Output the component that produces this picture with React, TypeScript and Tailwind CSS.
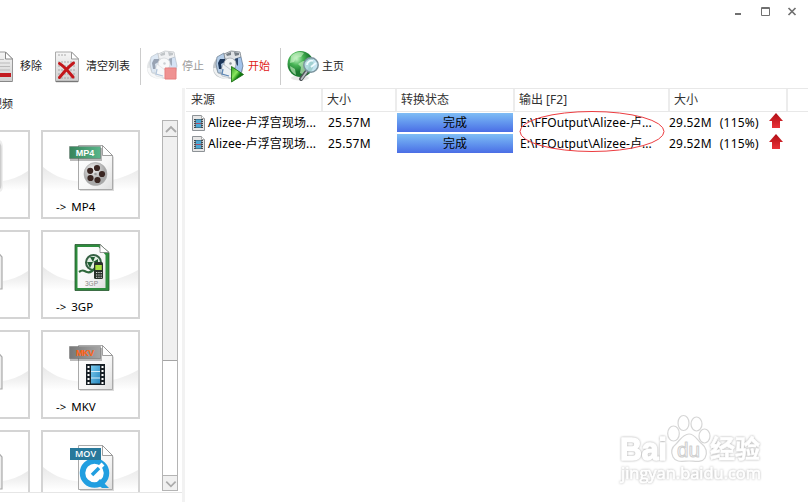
import type { ReactNode } from "react";

const Film = () => (
  <g>
    <rect x="0" y="0" width="19" height="21" fill="#182026" />
    <rect x="5" y="1.5" width="9" height="18" fill="url(#filmBlue)" />
    <path d="M5 7.5h9M5 14h9" stroke="#d5eefa" strokeWidth="1" />
    <path d="M2.5 2v18M16.5 2v18" stroke="#fff" strokeWidth="2" strokeDasharray="2 2" />
  </g>
);

const Reel = () => (
  <g>
    <circle cx="0" cy="0" r="11.5" fill="url(#reelGrey)" stroke="#aaa" strokeWidth="0.6" />
    <circle cx="1.5" cy="-6" r="3.1" fill="#3a2622" />
    <circle cx="6.5" cy="0" r="3.1" fill="#3a2622" />
    <circle cx="2" cy="6" r="3.1" fill="#3a2622" />
    <circle cx="-5" cy="4" r="3.1" fill="#3a2622" />
    <circle cx="-5.3" cy="-3.2" r="3.1" fill="#3a2622" />
    <circle cx="0" cy="0" r="1.3" fill="#999" />
  </g>
);

const Defs = () => (
  <svg className="absolute h-0 w-0">
    <defs>
      <linearGradient id="paper" x1="0" y1="0" x2="1" y2="1">
        <stop offset="0" stopColor="#fff" />
        <stop offset="0.6" stopColor="#f7f7f7" />
        <stop offset="1" stopColor="#dedede" />
      </linearGradient>
      <linearGradient id="paperDark" x1="0" y1="0" x2="0" y2="1">
        <stop offset="0" stopColor="#f6f6f6" />
        <stop offset="1" stopColor="#cfcfcf" />
      </linearGradient>
      <linearGradient id="filmBlue" x1="0" y1="0" x2="1" y2="1">
        <stop offset="0" stopColor="#7ccdf0" />
        <stop offset="1" stopColor="#2585bd" />
      </linearGradient>
      <radialGradient id="reelGrey" cx="0.4" cy="0.3">
        <stop offset="0" stopColor="#f4f4f4" />
        <stop offset="1" stopColor="#a9a9a9" />
      </radialGradient>
      <linearGradient id="tagGreen" x1="0" y1="0" x2="1" y2="0">
        <stop offset="0" stopColor="#37845b" />
        <stop offset="1" stopColor="#59b58a" />
      </linearGradient>
      <linearGradient id="tagGrey" x1="0" y1="0" x2="1" y2="0">
        <stop offset="0" stopColor="#777" />
        <stop offset="1" stopColor="#a5a5a5" />
      </linearGradient>
      <radialGradient id="globe" cx="0.35" cy="0.3">
        <stop offset="0" stopColor="#c5f5c6" />
        <stop offset="0.5" stopColor="#48b556" />
        <stop offset="1" stopColor="#1c7a30" />
      </radialGradient>
      <linearGradient id="play" x1="0" y1="0" x2="1" y2="1">
        <stop offset="0" stopColor="#2f9a20" />
        <stop offset="0.4" stopColor="#8be860" />
        <stop offset="0.6" stopColor="#128010" />
        <stop offset="1" stopColor="#0a4c08" />
      </linearGradient>
      <linearGradient id="arrowRed" x1="0" y1="0" x2="0" y2="1">
        <stop offset="0" stopColor="#b00d14" />
        <stop offset="1" stopColor="#e93238" />
      </linearGradient>
      <linearGradient id="swoosh" x1="0" y1="0" x2="0" y2="1">
        <stop offset="0" stopColor="#e9e9e9" />
        <stop offset="0.5" stopColor="#f2f2f2" />
        <stop offset="1" stopColor="#fff" />
      </linearGradient>
    </defs>
  </svg>
);

const ClearIcon = () => (
  <svg width="24" height="32" viewBox="0 0 24 32" className="block shrink-0">
    <path d="M.5 1h16l7 7v22.500H.5z" fill="url(#paperDark)" stroke="#aaa" />
    <path d="M1 30.500h22" stroke="#777" strokeWidth="1.4" />
    <path d="M16.5 1v7h7z" fill="#fff" stroke="#999" />
    <path d="M3 4h9M3 11h17M3 15h17M3 19h17M3 23h17M3 27h17" stroke="#999" strokeWidth="0.8" strokeDasharray="2 1" />
    <path d="M4.500 12.500c5 3 9 8 13.500 13.500M18.500 12C13 16 9 21 4.500 26.500" fill="none" stroke="#c4171b" strokeWidth="3" strokeLinecap="round" />
  </svg>
);

// left part is cut off by the window edge
const RemoveIcon = () => (
  <svg width="14" height="32" viewBox="0 0 14 32" className="block shrink-0">
    <path d="M-9 1H5.500l7 7v22.500H-9z" fill="url(#paperDark)" stroke="#999" />
    <path d="M5.500 1v7h7z" fill="#fff" stroke="#888" />
    <path d="M0 8.500h4M0 12h10M0 15.500h10M0 19h10" stroke="#bbb" />
    <path d="M0 22h11v4H0z" fill="#c31a20" />
    <path d="M0 30.500h12" stroke="#888" />
  </svg>
);

const Machine = ({ children, faded }: { children: ReactNode; faded?: boolean }) => (
  <svg width="32" height="33" viewBox="0 0 32 33" className="block shrink-0">
    <g opacity={faded ? 0.45 : 1}>
      <path d="M0 18c0-6 3-10 7-11h17c4 2 6 6 6 11 0 7-5 11-15 11S0 25 0 18z" fill="#c3c8cc" />
      <path d="M1.500 18c1 6 6 9.500 14 10" fill="none" stroke="#eff1f2" strokeWidth="2.500" />
      <path d="M4 7l7-4 1 6-2 14H5L3 14z" fill="#b4cde8" stroke="#7a8a9a" strokeWidth="0.8" />
      <path d="M11 4l7-3 9 1 1 5-5 3-11-1z" fill="#dfe2e5" stroke="#7c848b" strokeWidth="0.8" />
      <path d="M13 4l5-2v3l-4 1zM21 2l5 1v2l-4 1z" fill="#777f86" />
      <path d="M7 9h5v3l-4 2 1 5H6l-1-6z" fill="#1d3658" />
      <path d="M22 9l6-2 2 9-2 7-6-3z" fill="#a3c3ea" stroke="#6c819b" strokeWidth="0.8" />
      <path d="M22 9l3-1v8l-2-2z" fill="#2a4467" />
      <circle cx="17" cy="14" r="6" fill="#f1f3f4" stroke="#a3aab1" strokeWidth="0.8" />
      <circle cx="17.500" cy="13.500" r="1.200" fill="#8d959c" />
      <path d="M10 14l4 3 4 3 4 4-4 4-9-2-1-5z" fill="#edf1f4" stroke="#a4adb6" strokeWidth="0.6" />
      <path d="M10 19l-1 5 7 2" fill="none" stroke="#5c85b3" strokeWidth="1.300" />
    </g>
    {children}
  </svg>
);

const GlobeIcon = () => (
  <svg width="34" height="33" viewBox="0 0 34 33" className="block shrink-0">
    <ellipse cx="13" cy="28" rx="9" ry="2.500" fill="#e8e8e8" />
    <circle cx="13.500" cy="14" r="13" fill="url(#globe)" />
    <path d="M4 6c4-4 9-5 13-3l-3 4-5 1-2 4-4 1zM16 11l7 1-2 7-4 6-4-2 1-6-3-3zM3 16l5 3 1 6c-4-2-6-5-6-9z" fill="#d4f7cf" opacity="0.6" />
    <path d="M20 21l-6 8" stroke="#505659" strokeWidth="4" strokeLinecap="round" />
    <path d="M19.500 22l-5 7" stroke="#b8bfc2" strokeWidth="1.7" strokeLinecap="round" />
    <circle cx="24" cy="15" r="7.200" fill="#b9dfed" fillOpacity="0.85" stroke="#7b949e" strokeWidth="1.5" />
    <path d="M20 15c0-3 3-5 6-4M24 17l5-4" stroke="#effbff" strokeWidth="1.8" fill="none" />
  </svg>
);

const Swoosh = () => <path d="M0 35c12 10 25 15 47 15s36-5 48-12v20H0z" fill="url(#swoosh)" />;

const Paper = () => (
  <g>
    <path d="M36 14h24l10 10v34H36z" fill="#999" opacity="0.35" transform="translate(1 1)" />
    <path d="M35.500 13.500h24l10 10v34h-34z" fill="url(#paper)" stroke="#aaa" />
    <path d="M59.500 13.500v10h10z" fill="#fff" stroke="#888" strokeWidth="0.8" />
  </g>
);

const Tag = ({ text, fill, color }: { text: string; fill: string; color: string }) => (
  <g>
    <rect x="27" y="16" width="32" height="13" fill="#555" opacity="0.4" />
    <rect x="26.500" y="14.500" width="31" height="12" fill={fill} stroke="#555" strokeOpacity="0.35" />
    <text
      x="42"
      y="24"
      fill={color}
      fontSize="9"
      fontWeight="700"
      textAnchor="middle"
      textLength="18.500"
      fontFamily="Liberation Sans, sans-serif"
    >
      {text}
    </text>
  </g>
);

const art: Record<string, ReactNode> = {
  MP4: (
    <>
      <Paper />
      <g transform="translate(52.500 42)">
        <Reel />
      </g>
      <Tag text="MP4" fill="url(#tagGreen)" color="#fff" />
    </>
  ),
  "3GP": (
    <>
      <path d="M32 12.500h25l9 8v38H32z" fill="#2d8c3d" stroke="#27582e" strokeWidth="0.8" />
      <path d="M34.500 15h21l7 8v33h-28z" fill="url(#paper)" />
      <path d="M57 12.500v8h9z" fill="#fff" stroke="#777" strokeWidth="0.7" />
      <circle cx="50.500" cy="30.500" r="7.500" fill="#e4efe5" stroke="#356043" strokeWidth="2" />
      <path d="M50 30l-3-5h5zM50 30l-6 0 3 6zM50 30l5-3v5z" fill="#205d32" />
      <path d="M36 40c4-3 5-1 8 0s5 0 8-4" fill="none" stroke="#2f683b" strokeWidth="2.200" />
      <rect x="51" y="30" width="9" height="17" rx="1.500" fill="#29312a" />
      <rect x="52.300" y="33" width="6.500" height="5" fill="#a7df42" />
      <path d="M53 40.500h6M53 43h6M53 45.300h6" stroke="#ddd" strokeDasharray="1.300 1" />
      <text x="48.500" y="54" fontSize="6.500" fill="#888" textAnchor="middle" fontFamily="Liberation Sans, sans-serif">
        3GP
      </text>
    </>
  ),
  MKV: (
    <>
      <Paper />
      <g transform="translate(43 32)">
        <Film />
      </g>
      <Tag text="MKV" fill="url(#tagGrey)" color="#ff6417" />
    </>
  ),
  MOV: (
    <>
      <Paper />
      <circle cx="51.500" cy="41" r="12" fill="#fff" stroke="#209ee0" strokeWidth="5.500" />
      <path d="M57 47l9 9h-7l-6-5z" fill="#209ee0" />
      <path d="M49 43l7-7" stroke="#209ee0" strokeWidth="3.500" />
      <path d="M57 35l3-3" stroke="#fff" strokeWidth="4" />
      <rect x="27" y="16" width="31" height="12" fill="#28799b" />
      <text
        x="42.500"
        y="25"
        fontSize="9"
        fontWeight="600"
        fill="#fff"
        textAnchor="middle"
        textLength="21"
        fontFamily="Open Sans, sans-serif"
      >
        MOV
      </text>
    </>
  ),
};

const FormatCard = ({ name }: { name: string }) => (
  <div className="h-[89px] w-[99px] shrink-0 border-2 border-[#d4d4d4] bg-white">
    <svg width="95" height="67" viewBox="0 0 95 67" className="block">
      <Swoosh />
      {art[name]}
    </svg>
    <p className="flex gap-[5px] pl-[13px] font-['Noto_Sans'] text-[11.5px] leading-[16px] text-black">
      <span>{"->"}</span>
      <span>{name}</span>
    </p>
  </div>
);

// neighbour column, only the right edge is inside the window
const CutCard = ({ dark }: { dark?: boolean }) => (
  <div className="h-[89px] w-[30px] shrink-0 border-2 border-l-0 border-[#d4d4d4]">
    <svg width="28" height="85" viewBox="0 0 28 85" className="block">
      <path d="M3 49q13-2 25-10v19H3z" fill="url(#swoosh)" />
      {dark ? (
        <>
          <path d="M0 8v52q3-1 3-6V16q0-6-3-8" fill="#eee" />
          <path d="M0 11v46q1.500-1 1.500-5V17q0-4-1.500-6" fill="#ccc" />
        </>
      ) : (
        <path d="M-4 18l6 7v32h-6" fill="#eee" stroke="#aaa" strokeWidth="1.200" />
      )}
    </svg>
  </div>
);

const FileIcon = () => (
  <svg width="13" height="16" viewBox="0 0 13 16" className="block shrink-0">
    <path d="M.5.5h9l3 3v12H.500z" fill="#e6e6e6" stroke="#8d9296" />
    <path d="M9.500.500v3h3" fill="#fff" stroke="#aaa" />
    <rect x="2" y="4" width="9" height="9" fill="#3c4a52" />
    <rect x="4" y="4.500" width="5" height="8" fill="#4ba8d4" />
    <path d="M4 8.500h5" stroke="#b04c68" />
    <path d="M2.800 5v8M10.200 5v8" stroke="#fff" strokeDasharray="1 1" />
  </svg>
);

const UpArrow = () => (
  <svg width="14" height="16" viewBox="0 0 14 16" className="block shrink-0">
    <path d="M7 0l7 8h-3v7H3V8H0z" fill="url(#arrowRed)" />
  </svg>
);

const Row = () => (
  <div className="flex h-[21px] items-center text-[12px] leading-[18px] whitespace-pre text-black">
    <div className="flex w-[142px] items-center pl-[6px]">
      <FileIcon />
      <span className="ml-[3px] tracking-[0.1px]">Alizee-卢浮宫现场...</span>
    </div>
    <div className="w-[69px] tracking-[0.2px]">25.57M</div>
    <div className="mb-[2px] mt-px h-[19px] w-[116px] bg-gradient-to-b from-[#7fbdf5] to-[#4b6de5] pt-px text-center">
      完成
    </div>
    <div className="w-[156px] pl-[7px] tracking-[0.08px]">E:\FFOutput\Alizee-卢...</div>
    <div className="flex w-[100px] gap-[8px] tracking-[0.2px]">
      <span>29.52M</span>
      <span>(115%)</span>
    </div>
    <div className="-mt-[4px]">
      <UpArrow />
    </div>
  </div>
);

const headers = [
  { label: "来源", box: "w-[137px] pl-[5px]" },
  { label: "大小", box: "w-[74px] pl-[4px]" },
  { label: "转换状态", box: "w-[118px] pl-[4px]" },
  { label: "输出 [F2]", box: "w-[155px] pl-[4px]" },
  { label: "大小", box: "w-[118px] pl-[4px]" },
];

const ScrollBar = () => (
  <div className="mt-[2px] flex h-[371px] w-4 flex-col border border-[#b4b4b4] bg-white">
    <svg width="14" height="15" viewBox="0 0 14 15" className="block shrink-0 bg-[#f0f0f0]">
      <path d="M3 11l5-5 5 5" fill="none" stroke="#aaa" strokeWidth="1.800" />
    </svg>
    <div className="h-[225px] border-y border-[#a5a5a5] bg-[#f0f0f0]" />
    <div className="flex-1" />
    <svg width="14" height="15" viewBox="0 0 14 15" className="block shrink-0 border-t border-[#b4b4b4] bg-[#f0f0f0]">
      <path d="M3 6l5 5 5-5" fill="none" stroke="#aaa" strokeWidth="1.800" />
    </svg>
  </div>
);

const Watermark = () => (
  <svg
    width="160"
    height="80"
    viewBox="0 0 160 80"
    className="absolute left-[612px] top-[410px]"
    fill="#fff"
    stroke="#fff"
    strokeLinejoin="round"
  >
    <text
      x="8"
      y="50"
      textLength="47"
      lengthAdjust="spacingAndGlyphs"
      fontFamily="Liberation Sans, sans-serif"
      fontWeight="700"
      fontSize="31"
      strokeWidth="1.500"
      className="[filter:drop-shadow(0_0_0.8px_#aaa)]"
    >
      Bai
    </text>
    <g stroke="#d6d6d6" strokeWidth="1.200">
      <ellipse cx="61.500" cy="23.500" rx="5.800" ry="7.500" />
      <ellipse cx="71.500" cy="13" rx="5.500" ry="7.500" />
      <ellipse cx="84.500" cy="14" rx="5.500" ry="7" />
      <ellipse cx="92.500" cy="26" rx="5.500" ry="7" />
      <path d="M77 24c-6 0-9 6-13 10-5 4-5 9-3 13 3 6 10 4 16 4s13 2 16-3 1-11-3-14c-5-4-7-10-13-10z" />
    </g>
    <text
      x="65"
      y="46.500"
      fontFamily="Liberation Sans, sans-serif"
      fontSize="20"
      textLength="23"
      lengthAdjust="spacingAndGlyphs"
      fill="#fff"
      stroke="#cfcfcf"
      strokeWidth="1"
    >
      du
    </text>
    <text
      x="98"
      y="48"
      fontSize="25"
      fontWeight="700"
      fontFamily="Noto Sans CJK SC, sans-serif"
      textLength="50"
      strokeWidth="0.600"
      className="[filter:drop-shadow(0_0_0.8px_#aaa)]"
    >
      经验
    </text>
    <text
      x="9"
      y="69"
      fontSize="16"
      fontFamily="Open Sans, sans-serif"
      textLength="140"
      lengthAdjust="spacingAndGlyphs"
      strokeWidth="0.700"
      className="[filter:drop-shadow(0_0_0.8px_#b4b4b4)]"
    >
      jingyan.baidu.com
    </text>
  </svg>
);

const App = () => {
  return (
    <div className="relative flex h-[502px] w-[808px] flex-col overflow-hidden bg-white font-['Noto_Sans','Noto_Sans_CJK_SC',sans-serif]">
      <Defs />
      <header className="flex h-[46px] justify-end pr-[11px] pt-[7px]">
        <svg width="64" height="10" viewBox="0 0 64 10" className="block" fill="none" stroke="#707070">
          <path d="M2 7h6" strokeWidth="2" />
          <path d="M28.500.500h8v8h-8zM28 1.500h9" />
          <path d="M55.500 1l7 7M62.500 1l-7 7" strokeWidth="1.700" />
        </svg>
      </header>

      <nav className="flex h-[42px] shrink-0 items-center pb-px text-[11px] leading-[16px] text-[#222]">
        <RemoveIcon />
        <span className="ml-[6px] -mt-px w-[35px]">移除</span>
        <ClearIcon />
        <span className="ml-[7px] -mt-px w-[54px]">清空列表</span>
        <div className="h-[37px] w-px bg-[#ccc]" />
        <div className="ml-[6px]">
          <Machine faded>
            <path d="M18 18h11v11H18z" fill="#ef9292" stroke="#e77f7f" />
          </Machine>
        </div>
        <span className="ml-[3px] -mt-px w-[31px] text-[#999]">停止</span>
        <Machine>
          <path d="M18.500 16.500l12 8-12 7.500z" fill="url(#play)" stroke="#11690c" strokeWidth="0.8" />
        </Machine>
        <span className="ml-[3px] -mt-px w-[32px] text-[#e02218]">开始</span>
        <div className="h-[37px] w-px bg-[#ccc]" />
        <div className="ml-[6px]">
          <GlobeIcon />
        </div>
        <span className="ml-px -mt-px">主页</span>
      </nav>

      <main className="flex min-h-0 flex-1">
        <aside className="w-[182px] shrink-0">
          <div className="h-[30px] overflow-hidden pt-[8px] text-[11px] leading-[16px] text-[#222]">
            <span className="-ml-[9px] block">视频</span>
          </div>
          <div className="flex h-[375px] overflow-hidden border-b border-[#e6e6e6]">
            <div className="flex w-[162px] flex-wrap content-start gap-x-[11px] gap-y-[11px] pt-[12px]">
              <CutCard dark />
              <FormatCard name="MP4" />
              <CutCard />
              <FormatCard name="3GP" />
              <CutCard />
              <FormatCard name="MKV" />
              <CutCard />
              <div className="h-[62px] overflow-hidden">
                <div className="h-[89px] w-[99px] border-2 border-[#d4d4d4]">
                  <svg width="95" height="67" viewBox="0 0 95 67" className="block">
                    <Swoosh />
                    {art.MOV}
                  </svg>
                </div>
              </div>
            </div>
            <ScrollBar />
          </div>
        </aside>

        <section className="flex-1 border-l-[3px] border-[#f2f2f2] pl-px">
          <div className="flex h-6 border-y border-[#e8e8e8] text-[12px] leading-[22px] text-[#333]">
            {headers.map((h, i) => (
              <div key={i} className={`${h.box} shrink-0 border-r-2 border-[#ececec]`}>
                {h.label}
              </div>
            ))}
          </div>
          <Row />
          <Row />
        </section>
      </main>

      <svg width="150" height="46" viewBox="0 0 150 46" className="absolute left-[517px] top-[108px]">
        <ellipse cx="75" cy="23.500" rx="72" ry="20" fill="none" stroke="#ec3c40" strokeWidth="1" />
      </svg>
      <Watermark />
    </div>
  );
};

export default App;
